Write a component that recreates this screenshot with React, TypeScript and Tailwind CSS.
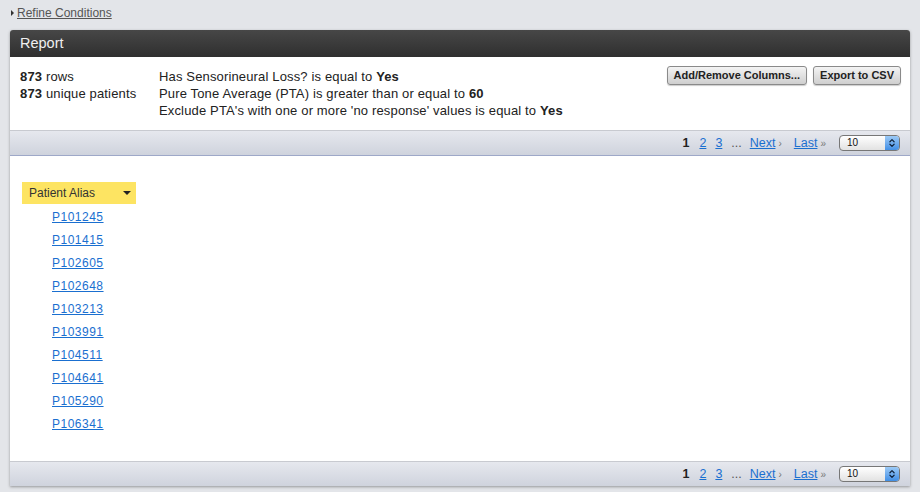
import { ChevronsUpDown } from "lucide-react";

const aliases = [
  "P101245",
  "P101415",
  "P102605",
  "P102648",
  "P103213",
  "P103991",
  "P104511",
  "P104641",
  "P105290",
  "P106341",
];

function Pager() {
  return (
    <div className="h-[25px] bg-gradient-to-b from-[#e6e8ee] to-[#cfd3dd] border-t border-[#c8cad0] flex items-center justify-end pr-[10px] text-[12.5px]">
      <span className="font-bold text-[#222] mr-[10px]">1</span>
      <a className="text-[#1a6fd0] underline mr-[9px]">2</a>
      <a className="text-[#1a6fd0] underline mr-[9px]">3</a>
      <span className="text-[#555] mr-[8px]">...</span>
      <a className="text-[#1a6fd0] underline">Next</a>
      <span className="text-[#777] text-[10px] ml-[3px] mr-[12px]">›</span>
      <a className="text-[#1a6fd0] underline">Last</a>
      <span className="text-[#777] text-[10px] ml-[3px] mr-[13px]">»</span>
      <div className="w-[61px] h-[16px] rounded-[4px] border border-[#777] bg-gradient-to-b from-white to-[#e2e2e2] flex items-center overflow-hidden">
        <span className="flex-1 pl-[7px] text-[10px] text-[#111] leading-none">10</span>
        <div className="w-[14px] h-full bg-gradient-to-b from-[#9ccaf6] to-[#3f8ee5] flex items-center justify-center">
          <ChevronsUpDown size={10} strokeWidth={3} className="text-[#10243e]" />
        </div>
      </div>
    </div>
  );
}

export default function App() {
  return (
    <div
      className="w-[920px] h-[492px] bg-[#e3e5e9] overflow-hidden pt-[5px]"
      style={{ fontFamily: '"Liberation Sans", Arial, sans-serif' }}
    >
      <div className="flex items-center pl-[11px] h-[16px] text-[12px] text-[#555]">
        <span className="w-0 h-0 border-y-[3px] border-y-transparent border-l-[3px] border-l-[#333] mr-[3px]" />
        <a className="underline">Refine Conditions</a>
      </div>
      <div className="ml-[10px] w-[900px] mt-[9px] rounded-t-[3px] shadow-[0_1px_3px_rgba(0,0,0,0.35)] bg-white">
        <div className="h-[27px] rounded-t-[3px] bg-gradient-to-b from-[#474747] to-[#2f2f2f] flex items-center pl-[10px] text-[14.5px] text-[#f0f0f0]">
          Report
        </div>
        <div className="h-[73px] flex pl-[10px] pr-[9px] pt-[11px] text-[13px] tracking-[0.15px] leading-[17px] text-[#222]">
          <div className="w-[139px]">
            <div>
              <b>873</b> rows
            </div>
            <div>
              <b>873</b> unique patients
            </div>
          </div>
          <div className="flex-1">
            <div>
              Has Sensorineural Loss? is equal to <b>Yes</b>
            </div>
            <div>
              Pure Tone Average (PTA) is greater than or equal to <b>60</b>
            </div>
            <div>
              Exclude PTA's with one or more 'no response' values is equal to <b>Yes</b>
            </div>
          </div>
          <div className="flex gap-[6px] -mt-[2px] self-start tracking-normal">
            <button className="h-[19px] px-[6px] rounded-[3px] border border-[#8a8a8a] bg-gradient-to-b from-[#f4f4f4] to-[#cfcfcf] text-[11px] font-bold text-[#222] shadow-[0_1px_1px_rgba(0,0,0,0.2)]">
              Add/Remove Columns...
            </button>
            <button className="h-[19px] px-[6px] rounded-[3px] border border-[#8a8a8a] bg-gradient-to-b from-[#f4f4f4] to-[#cfcfcf] text-[11px] font-bold text-[#222] shadow-[0_1px_1px_rgba(0,0,0,0.2)]">
              Export to CSV
            </button>
          </div>
        </div>
        <Pager />
        <div className="h-[306px] border-t border-[#9ea8c8] pt-[26px] pl-[12px]">
          <div className="w-[114px] h-[22px] bg-[#fde462] flex items-center justify-between pl-[7px] pr-[5px] text-[12px] text-[#333]">
            <span>Patient Alias</span>
            <span className="w-0 h-0 border-x-[4px] border-x-transparent border-t-[4px] border-t-[#222]" />
          </div>
          <div className="pl-[30px] pt-[2px] flex flex-col">
            {aliases.map((a) => (
              <a key={a} className="h-[23px] leading-[23px] text-[12px] tracking-[0.5px] text-[#1a6fd0] underline">
                {a}
              </a>
            ))}
          </div>
        </div>
        <Pager />
      </div>
    </div>
  );
}
